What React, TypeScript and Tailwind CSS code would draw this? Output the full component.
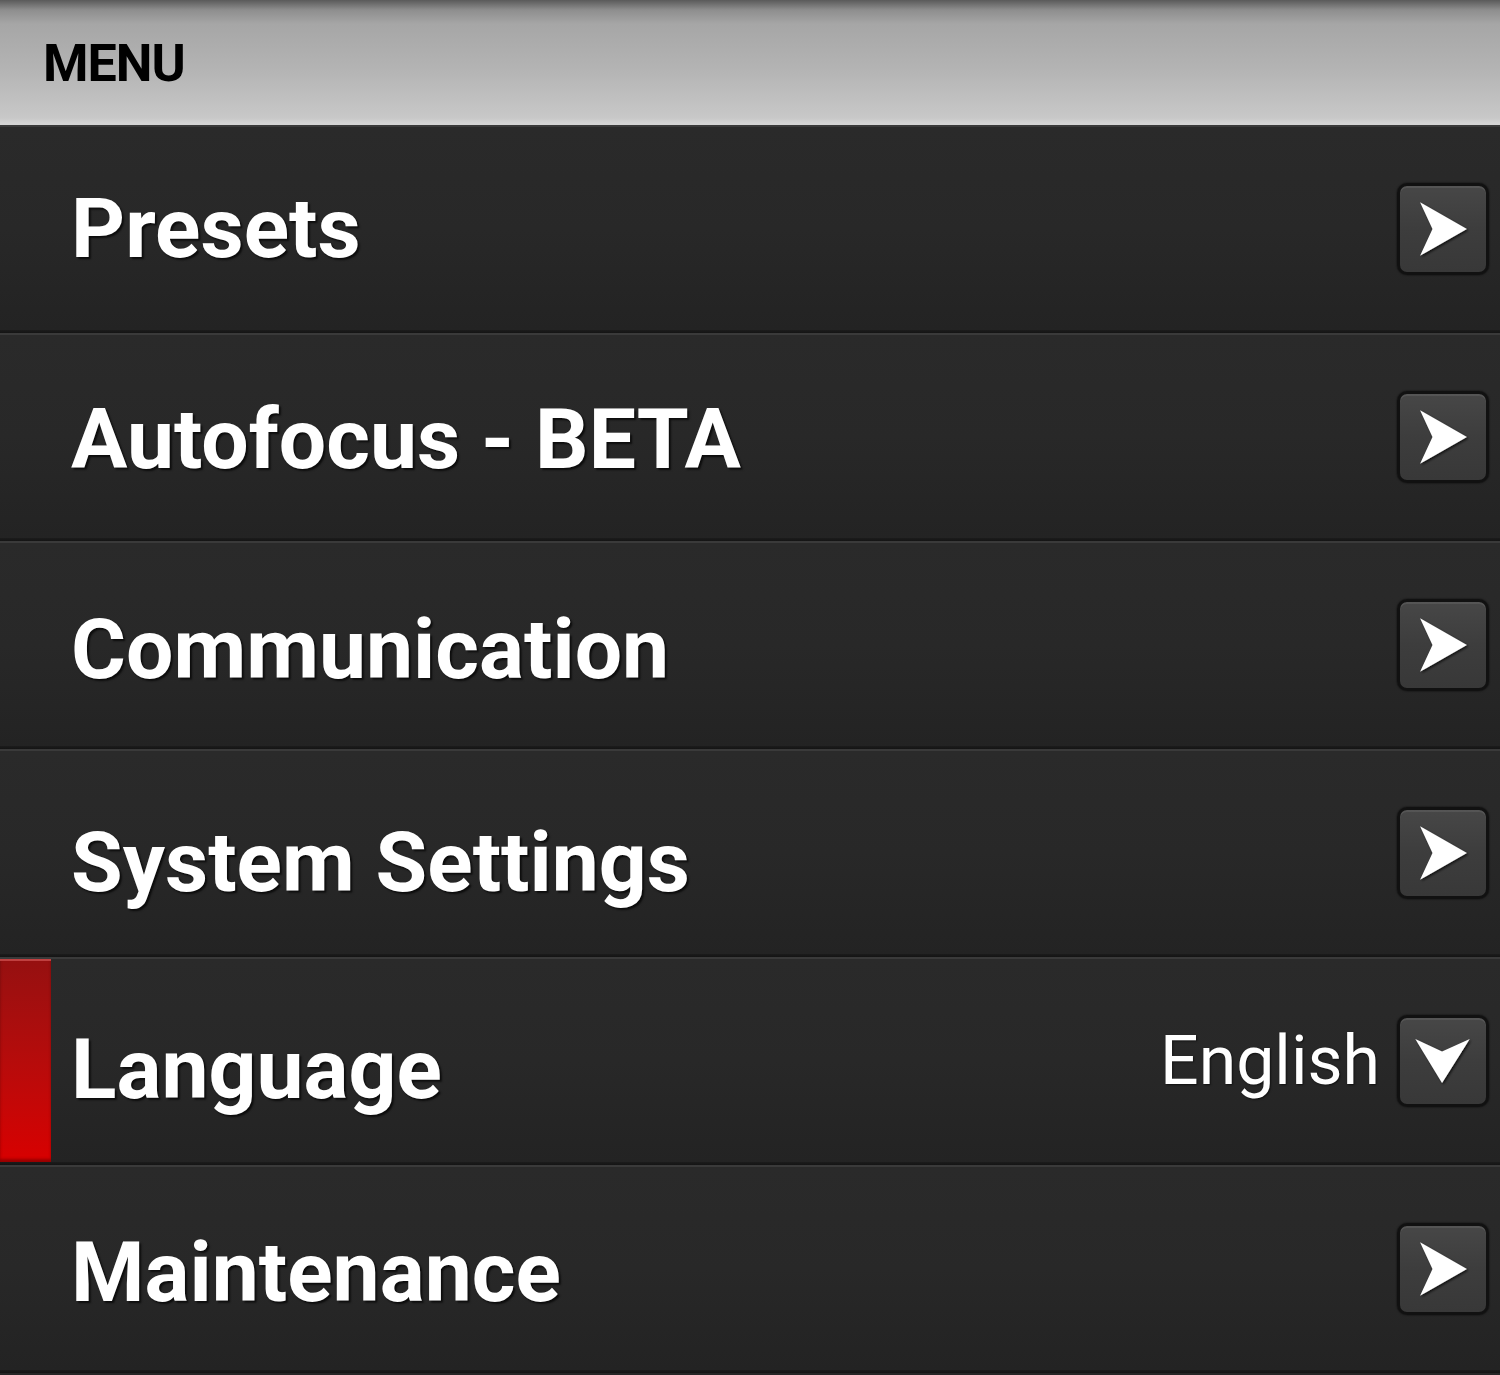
import React from "react";

const ArrowRight = () => (
  <svg width="90" height="90" viewBox="0 0 90 90" className="block">
    <defs>
      <filter id="ds" x="-20%" y="-20%" width="140%" height="140%">
        <feDropShadow dx="1.5" dy="1.5" stdDeviation="1.2" floodColor="#000" floodOpacity="0.7" />
      </filter>
    </defs>
    <polygon points="21,17 70,45 21,73 34,45" fill="#ffffff" filter="url(#ds)" />
  </svg>
);

const ArrowDown = () => (
  <svg width="90" height="90" viewBox="0 0 90 90" className="block">
    <defs>
      <filter id="ds2" x="-20%" y="-20%" width="140%" height="140%">
        <feDropShadow dx="1.5" dy="1.5" stdDeviation="1.2" floodColor="#000" floodOpacity="0.7" />
      </filter>
    </defs>
    <polygon points="16,22 44,35 73,22 44,68" fill="#ffffff" filter="url(#ds2)" />
  </svg>
);

const Btn = ({ down }: { down?: boolean }) => (
  <div className="w-[92px] h-[92px] rounded-[10px] border-[3px] border-[#111111] bg-gradient-to-b from-[#474747] via-[#3d3d3d] to-[#383838] shadow-[inset_0_2px_0_rgba(255,255,255,0.08),0_0_2px_rgba(0,0,0,0.8)] flex items-center justify-center shrink-0">
    {down ? <ArrowDown /> : <ArrowRight />}
  </div>
);

const Row = ({
  label,
  value,
  active,
  down,
  shift,
}: {
  label: string;
  value?: string;
  active?: boolean;
  down?: boolean;
  shift: string;
}) => (
  <div className="h-[208px] flex flex-col bg-[#282828]">
    <div className="h-[2px] bg-[#3a3a3a]" />
    <div className="flex-1 flex items-stretch bg-gradient-to-b from-[#2a2a2a] via-[#282828] to-[#232323]">
      {active ? (
        <div className="w-[51px] shrink-0 bg-gradient-to-b from-[#961010] to-[#d80000] border-t-2 border-[#c04040] shadow-[inset_0_-3px_3px_rgba(0,0,0,0.3)]" />
      ) : (
        <div className="w-[51px] shrink-0" />
      )}
      <div className="flex-1 flex items-center pl-[20px] pr-[11px]">
        <div className="flex-1">
          <div
            className={`${shift} text-white font-bold text-[84px] leading-none [text-shadow:2px_2px_2px_rgba(0,0,0,0.7)] [font-family:Roboto,'Liberation_Sans',sans-serif]`}
          >
            {label}
          </div>
        </div>
        {value && (
          <div className="mr-[17px] text-white text-[68px] leading-none [text-shadow:1px_1px_2px_rgba(0,0,0,0.6)] [font-family:Roboto,'Liberation_Sans',sans-serif]">
            {value}
          </div>
        )}
        <Btn down={down} />
      </div>
    </div>
    <div className="h-[3px] bg-gradient-to-b from-[#1c1c1c] to-[#141414]" />
  </div>
);

export default function App() {
  return (
    <div className="w-[1500px] h-[1375px] bg-[#262626] overflow-hidden">
      <div className="h-[125px] flex items-center pl-[43px] bg-[linear-gradient(to_bottom,#5a5a5a_0px,#8e8e8e_10px,#a6a6a6_24px,#b4b4b4_70px,#c8c8c8_118px,#d4d4d4_123px,#d4d4d4_125px)]">
        <span className="text-black font-bold text-[52px] tracking-[-1px] leading-none mt-[2px] [font-family:Roboto,'Liberation_Sans',sans-serif]">
          MENU
        </span>
      </div>
      <Row label="Presets" shift="translate-y-0" />
      <Row label="Autofocus - BETA" shift="translate-y-[3px]" />
      <Row label="Communication" shift="translate-y-[5px]" />
      <Row label="System Settings" shift="translate-y-[10px]" />
      <Row label="Language" value="English" active down shift="translate-y-[9px]" />
      <Row label="Maintenance" shift="translate-y-[4px]" />
    </div>
  );
}
